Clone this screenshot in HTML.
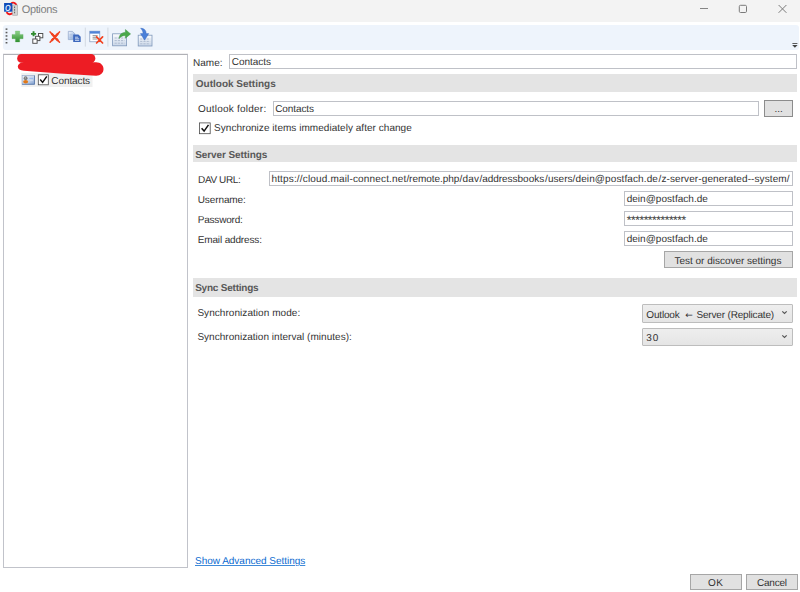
<!DOCTYPE html>
<html>
<head>
<meta charset="utf-8">
<title>Options</title>
<style>
html,body{margin:0;padding:0;}
body{width:800px;height:592px;position:relative;overflow:hidden;background:#fff;
 font-family:"Liberation Sans","DejaVu Sans",sans-serif;font-size:10px;color:#333;text-rendering:geometricPrecision;}
.abs{position:absolute;}
.t{position:absolute;white-space:nowrap;line-height:14px;height:14px;}
#titlebar{left:0;top:0;width:800px;height:21.5px;background:#f3f3f3;}
#toolbar{left:3px;top:25px;width:796px;height:25.2px;background:#eef4fc;border-radius:3px;}
#tree{left:3px;top:54px;width:183px;height:512px;border:1px solid;border-color:#b0b1b6 #c1c3ca #c1c3ca #c1c3ca;box-shadow:0 -1px 0 #f0f0f2;background:#fff;}
.inp{position:absolute;border:1px solid #bfc1c7;background:#fff;box-sizing:border-box;height:15px;}
.hdr{position:absolute;left:193px;width:604px;height:18px;background:#e4e4e4;}
.btn{position:absolute;box-sizing:border-box;border:1px solid #a6a6a6;background:#e1e1e1;}
.combo{position:absolute;box-sizing:border-box;border:1px solid #bdbdbd;background:linear-gradient(#eeeeee,#e5e5e5);border-radius:1px;}
</style>
</head>
<body>
<div id="titlebar" class="abs"></div>
<!-- app icon -->
<svg class="abs" style="left:0;top:0" width="22" height="20" viewBox="0 0 22 20">
 <path d="M11 3.6A3.3 3.3 0 0 1 16.4 5.2" fill="none" stroke="#f01418" stroke-width="1.7"/>
 <path d="M6.6 12.2A3.6 3.6 0 0 0 12.4 13.2" fill="none" stroke="#f01418" stroke-width="1.9"/>
 <rect x="12.7" y="5" width="4.7" height="10.2" fill="#d4d4d4" stroke="#9a9a9a" stroke-width="0.6"/>
 <path d="M14.6 6.5V14" stroke="#555" stroke-width="0.9" stroke-dasharray="1.6 1"/>
 <rect x="4.1" y="3" width="8.2" height="8.7" fill="#0f4bb8"/>
 <text transform="translate(5 10.8) scale(0.8 1)" font-family="Liberation Sans,sans-serif" font-size="9" font-weight="bold" font-style="italic" fill="#dde7fb" style="text-rendering:geometricPrecision">O</text>
</svg>
<div class="t" style="left:21.74px;top:3px;letter-spacing:-0.367px;font-size:11px;color:#808080;">Options</div>
<!-- window controls -->
<svg class="abs" style="left:690px;top:0" width="110" height="20" viewBox="0 0 110 20">
 <path d="M10 8.5H18" stroke="#858585" stroke-width="1" fill="none"/>
 <rect x="49.3" y="5.3" width="7.2" height="7.2" rx="1.2" fill="none" stroke="#7a7a7a" stroke-width="1"/>
 <path d="M88.6 5L96.4 12.8M96.4 5L88.6 12.8" stroke="#7a7a7a" stroke-width="1" fill="none"/>
</svg>

<div id="toolbar" class="abs"></div>
<!-- toolbar icons -->
<svg class="abs" style="left:0;top:22px" width="800" height="32" viewBox="0 22 800 32">
 <defs>
  <linearGradient id="gp" x1="0" y1="0" x2="0" y2="1"><stop offset="0" stop-color="#8fd38a"/><stop offset="1" stop-color="#2f8f2f"/></linearGradient>
  <linearGradient id="gb" x1="0" y1="0" x2="1" y2="1"><stop offset="0" stop-color="#f4f8fd"/><stop offset="1" stop-color="#86a8dc"/></linearGradient>
  <linearGradient id="gt" x1="0" y1="0" x2="0" y2="1"><stop offset="0" stop-color="#fbfcfe"/><stop offset="1" stop-color="#c9d6e8"/></linearGradient>
 </defs>
 <!-- grip -->
 <g fill="#5a5a5a"><rect x="5.6" y="28.4" width="1.8" height="1.5"/><rect x="5.6" y="31.8" width="1.8" height="1.5"/><rect x="5.6" y="35.2" width="1.8" height="1.5"/><rect x="5.6" y="38.6" width="1.8" height="1.5"/><rect x="5.6" y="42" width="1.8" height="1.5"/></g>
 <!-- add -->
 <path d="M15.4 31h4.3v3.4h3.4v4.3h-3.4v3.3h-4.3v-3.3H12v-4.3h3.4z" fill="url(#gp)" stroke="#4aa64a" stroke-width="0.25"/>
 <!-- add multiple -->
 <path d="M32.6 31.3h1.9v1.6h1.6v1.9h-1.6v1.5h-1.9v-1.5H31v-1.9h1.6z" fill="#2e8b2e"/>
 <g fill="#fff" stroke="#4c4c4c" stroke-width="0.95"><rect x="38.5" y="33.5" width="4.3" height="4.3"/><rect x="35.6" y="36.3" width="4.3" height="4.3"/><rect x="32.8" y="39" width="4.3" height="4.3"/></g>
 <!-- delete -->
 <path d="M50.1 31.9L59.5 42.3M59.5 31.9L50.1 42.3" stroke="#f2421f" stroke-width="1.5" stroke-linecap="round" fill="none"/>
 <path d="M52 34L57.6 40.2M57.6 34L52 40.2" stroke="#f2421f" stroke-width="2.4" stroke-linecap="round" fill="none"/>
 <!-- copy -->
 <path d="M68.3 31.4h4.2l2.2 2.2v6h-6.4z" fill="url(#gb)" stroke="#8ea4c8" stroke-width="0.7"/>
 <path d="M69.6 34.4h3M69.6 36h3.4M69.6 37.6h3" stroke="#a9bcdc" stroke-width="0.7"/>
 <path d="M73.2 34.5h5.2l2.3 2.3v5.1h-7.5z" fill="#3d68bd"/>
 <path d="M75 37.2h3.2M75 38.8h4.2M75 40.4h4.2" stroke="#e6eefb" stroke-width="0.8"/>
 <!-- separator -->
 <rect x="84.8" y="27.6" width="1" height="19" fill="#d3d9e2"/>
 <!-- delete cache -->
 <rect x="89.8" y="31.2" width="10" height="10.6" fill="#fdfdfe" stroke="#7d94b8" stroke-width="0.7"/>
 <rect x="89.8" y="31.2" width="10" height="2.4" fill="#4f83d6"/>
 <path d="M92.6 35.6h5M92.6 37.3h5M92.6 39h5" stroke="#8a8a8a" stroke-width="0.9"/>
 <path d="M96.6 36.8L102.6 43M102.6 36.8L96.6 43" stroke="#f2421f" stroke-width="1.7" stroke-linecap="round"/>
 <!-- separator -->
 <rect x="107.4" y="27.6" width="1" height="19" fill="#d3d9e2"/>
 <!-- export -->
 <rect x="112.6" y="33.8" width="14" height="12" fill="url(#gt)" stroke="#7f98bb" stroke-width="0.8"/>
 <path d="M114.6 38h10M114.6 40.6h10M114.6 43.2h10" stroke="#aebbd0" stroke-width="1" stroke-dasharray="2.2 1"/>
 <path d="M119.2 38.6c0-4 2.4-6.2 6.2-6.2v-2.9l5.2 4.4-5.2 4.4v-2.8c-2.6 0-4.4 0.8-6.2 3.1z" fill="#4aa84a" stroke="#2f8a36" stroke-width="0.4"/>
 <!-- import -->
 <rect x="138.2" y="35.2" width="13.8" height="10.8" fill="url(#gt)" stroke="#7f98bb" stroke-width="0.8"/>
 <path d="M140.2 39h10M140.2 41.4h10M140.2 43.8h10" stroke="#aebbd0" stroke-width="1" stroke-dasharray="2.2 1"/>
 <path d="M140.6 28.2c3.6 0 5.6 2 5.6 5.4h2.6l-4.2 6.6-4.2-6.6h2.6c0-2.2-0.8-3.8-2.4-5.4z" fill="#4a7fd8" stroke="#3566bd" stroke-width="0.4"/>
 <!-- overflow -->
 <path d="M792.4 43.5h5" stroke="#4a4a4a" stroke-width="0.9"/>
 <path d="M792.2 45h5.4l-2.7 2.8z" fill="#444"/>
</svg>

<div id="tree" class="abs"></div>
<!-- tree content -->
<svg class="abs" style="left:4px;top:54px" width="110" height="36" viewBox="4 54 110 36">
 <rect x="21.3" y="73" width="71.2" height="14" fill="#f0f0f0"/>
 <path d="M21.5 58.4H91" stroke="#ed1c24" stroke-width="8.7" stroke-linecap="round" fill="none"/>
 <path d="M22.5 62.4C24 61.6 26 61.2 30 61.2L90 61.2L93 62.3L96 62.3C100.5 62.3 103.5 65.2 103.5 69C103.5 73 100.5 75.8 96 75.7L60 73.4L24 70.8C20 70.5 17.8 69 17.8 66.6C17.8 64.4 19.5 62.9 22.5 62.4Z" fill="#ed1c24"/>
 <!-- contact card icon -->
 <defs><linearGradient id="gc" x1="0" y1="0" x2="1" y2="1"><stop offset="0" stop-color="#eef2f9"/><stop offset="0.55" stop-color="#c9d7ec"/><stop offset="1" stop-color="#7f9fd0"/></linearGradient></defs>
 <rect x="22.1" y="75.4" width="12.3" height="8.8" fill="url(#gc)" stroke="#8da3c6" stroke-width="0.6"/>
 <path d="M22.1 84.3H34.5V75.6" stroke="#5676a8" stroke-width="0.8" fill="none"/>
 <circle cx="25.6" cy="78.2" r="1.9" fill="#777"/>
 <circle cx="25.4" cy="77.9" r="0.8" fill="#a8a8a8"/>
 <ellipse cx="25.6" cy="81.7" rx="2.5" ry="1.7" fill="#e07818"/>
 <path d="M29.4 78.4h3.8" stroke="#8db6f2" stroke-width="0.9"/>
 <path d="M29.8 80.2h3.2" stroke="#dfe9f8" stroke-width="0.8"/>
 <!-- checkbox -->
 <rect x="38.3" y="74.8" width="10" height="10" fill="#fff" stroke="#4a4a4a" stroke-width="0.8"/>
 <path d="M40.2 79.6l2.4 2.8 4.2-6" stroke="#111" stroke-width="1.5" fill="none"/>
</svg>
<div class="t" style="left:51.36px;top:75px;letter-spacing:-0.105px;">Contacts</div>

<!-- right pane -->
<div class="t" style="left:192.88px;top:57px;letter-spacing:0.079px;">Name:</div>
<div class="inp" style="left:229px;top:54px;width:568.4px"></div>
<div class="t" style="left:231.74px;top:56px;letter-spacing:-0.024px;">Contacts</div>

<div class="hdr" style="top:74px"></div>
<div class="t" style="left:195.83px;top:78px;letter-spacing:-0.008px;font-weight:bold;color:#585858;">Outlook Settings</div>
<div class="t" style="left:197.92px;top:103px;letter-spacing:0.231px;">Outlook folder:</div>
<div class="inp" style="left:272.5px;top:101px;width:486.5px"></div>
<div class="t" style="left:275.15px;top:103px;letter-spacing:-0.077px;">Contacts</div>
<div class="btn" style="left:764px;top:100px;width:29px;height:17px;border-color:#8c8c8c"></div>
<div class="t" style="left:774.53px;top:103px;letter-spacing:-0.087px;">...</div>
<svg class="abs" style="left:198px;top:120.6px" width="15" height="15" viewBox="0 0 15 15">
 <rect x="1.4" y="1.9" width="10.8" height="10.8" fill="#fff" stroke="#4a4a4a" stroke-width="0.8"/>
 <path d="M3.6 7.2l2.5 2.9 4.4-6.2" stroke="#111" stroke-width="1.5" fill="none"/>
</svg>
<div class="t" style="left:214.09px;top:122px;letter-spacing:0.036px;">Synchronize items immediately after change</div>

<div class="hdr" style="top:145px;height:17.1px"></div>
<div class="t" style="left:195.16px;top:149px;letter-spacing:-0.086px;font-weight:bold;color:#585858;">Server Settings</div>
<div class="t" style="left:198.06px;top:174px;letter-spacing:-0.384px;">DAV URL:</div>
<div class="inp" style="left:268.5px;top:171px;width:524.5px"></div>
<div class="abs" style="left:0;top:0"><div class="t" style="left:271.43px;top:173px;letter-spacing:0.165px;">https://cloud.mail-connect.net</div><div class="t" style="left:406.40px;top:173px;letter-spacing:-0.052px;">/remote.php</div><div class="t" style="left:459.41px;top:173px;letter-spacing:0.232px;">/dav</div><div class="t" style="left:479.40px;top:173px;letter-spacing:-0.022px;">/addressbooks</div><div class="t" style="left:545.12px;top:173px;letter-spacing:0.042px;">/users</div><div class="t" style="left:572.59px;top:173px;letter-spacing:0.113px;">/dein@postfach.de</div><div class="t" style="left:658.52px;top:173px;letter-spacing:0.099px;">/z-server-generated--system/</div></div>
<div class="t" style="left:197.68px;top:194px;letter-spacing:-0.094px;">Username:</div>
<div class="inp" style="left:624px;top:191px;width:169px"></div>
<div class="t" style="left:626.68px;top:193px;letter-spacing:0.028px;">dein@postfach.de</div>
<div class="t" style="left:197.73px;top:214px;letter-spacing:-0.196px;">Password:</div>
<div class="inp" style="left:624px;top:211px;width:169px"></div>
<div class="t" style="left:626.8px;top:213px;font-size:12px;letter-spacing:-0.46px;color:#3a3a3a">**************</div>
<div class="t" style="left:197.78px;top:234px;letter-spacing:-0.152px;">Email address:</div>
<div class="inp" style="left:624px;top:231px;width:169px"></div>
<div class="t" style="left:626.68px;top:233px;letter-spacing:0.028px;">dein@postfach.de</div>
<div class="btn" style="left:664px;top:251px;width:129px;height:17px"></div>
<div class="t" style="left:674.55px;top:255px;letter-spacing:-0.018px;">Test or discover settings</div>

<div class="hdr" style="top:278px;height:18.5px"></div>
<div class="t" style="left:195.16px;top:282px;letter-spacing:-0.221px;font-weight:bold;color:#585858;">Sync Settings</div>
<div class="t" style="left:197.38px;top:307px;letter-spacing:0.054px;">Synchronization mode:</div>
<div class="combo" style="left:642px;top:304px;width:151px;height:18.5px"></div>
<div class="t" style="left:646.31px;top:309px;letter-spacing:-0.165px;">Outlook <span style="font-family:'DejaVu Sans',sans-serif;font-size:9px;position:relative;top:-0.5px;margin:0 1.2px 0 3px">←</span> Server (Replicate)</div>
<svg class="abs" style="left:780px;top:308px" width="10" height="10" viewBox="0 0 10 10"><path d="M2.3 3.3L4.5 5.5L6.7 3.3" stroke="#555" stroke-width="1.15" fill="none"/></svg>
<div class="t" style="left:197.38px;top:331px;letter-spacing:0.032px;">Synchronization interval (minutes):</div>
<div class="combo" style="left:642px;top:327.5px;width:151px;height:18.5px"></div>
<div class="t" style="left:646.14px;top:332px;letter-spacing:1.115px;">30</div>
<svg class="abs" style="left:780px;top:331.5px" width="10" height="10" viewBox="0 0 10 10"><path d="M2.3 3.3L4.5 5.5L6.7 3.3" stroke="#555" stroke-width="1.15" fill="none"/></svg>

<div class="t" style="left:195.01px;top:555px;letter-spacing:-0.015px;color:#0a6ad0;text-decoration:underline;text-decoration-thickness:1px;text-underline-offset:0.5px;text-decoration-color:#3f8ad8;">Show Advanced Settings</div>
<div class="btn" style="left:690px;top:574px;width:52px;height:16px"></div>
<div class="t" style="left:708.12px;top:577px;letter-spacing:0.290px;">OK</div>
<div class="btn" style="left:746px;top:574px;width:51.5px;height:16px"></div>
<div class="t" style="left:756.89px;top:577px;letter-spacing:-0.190px;">Cancel</div>
</body>
</html>
